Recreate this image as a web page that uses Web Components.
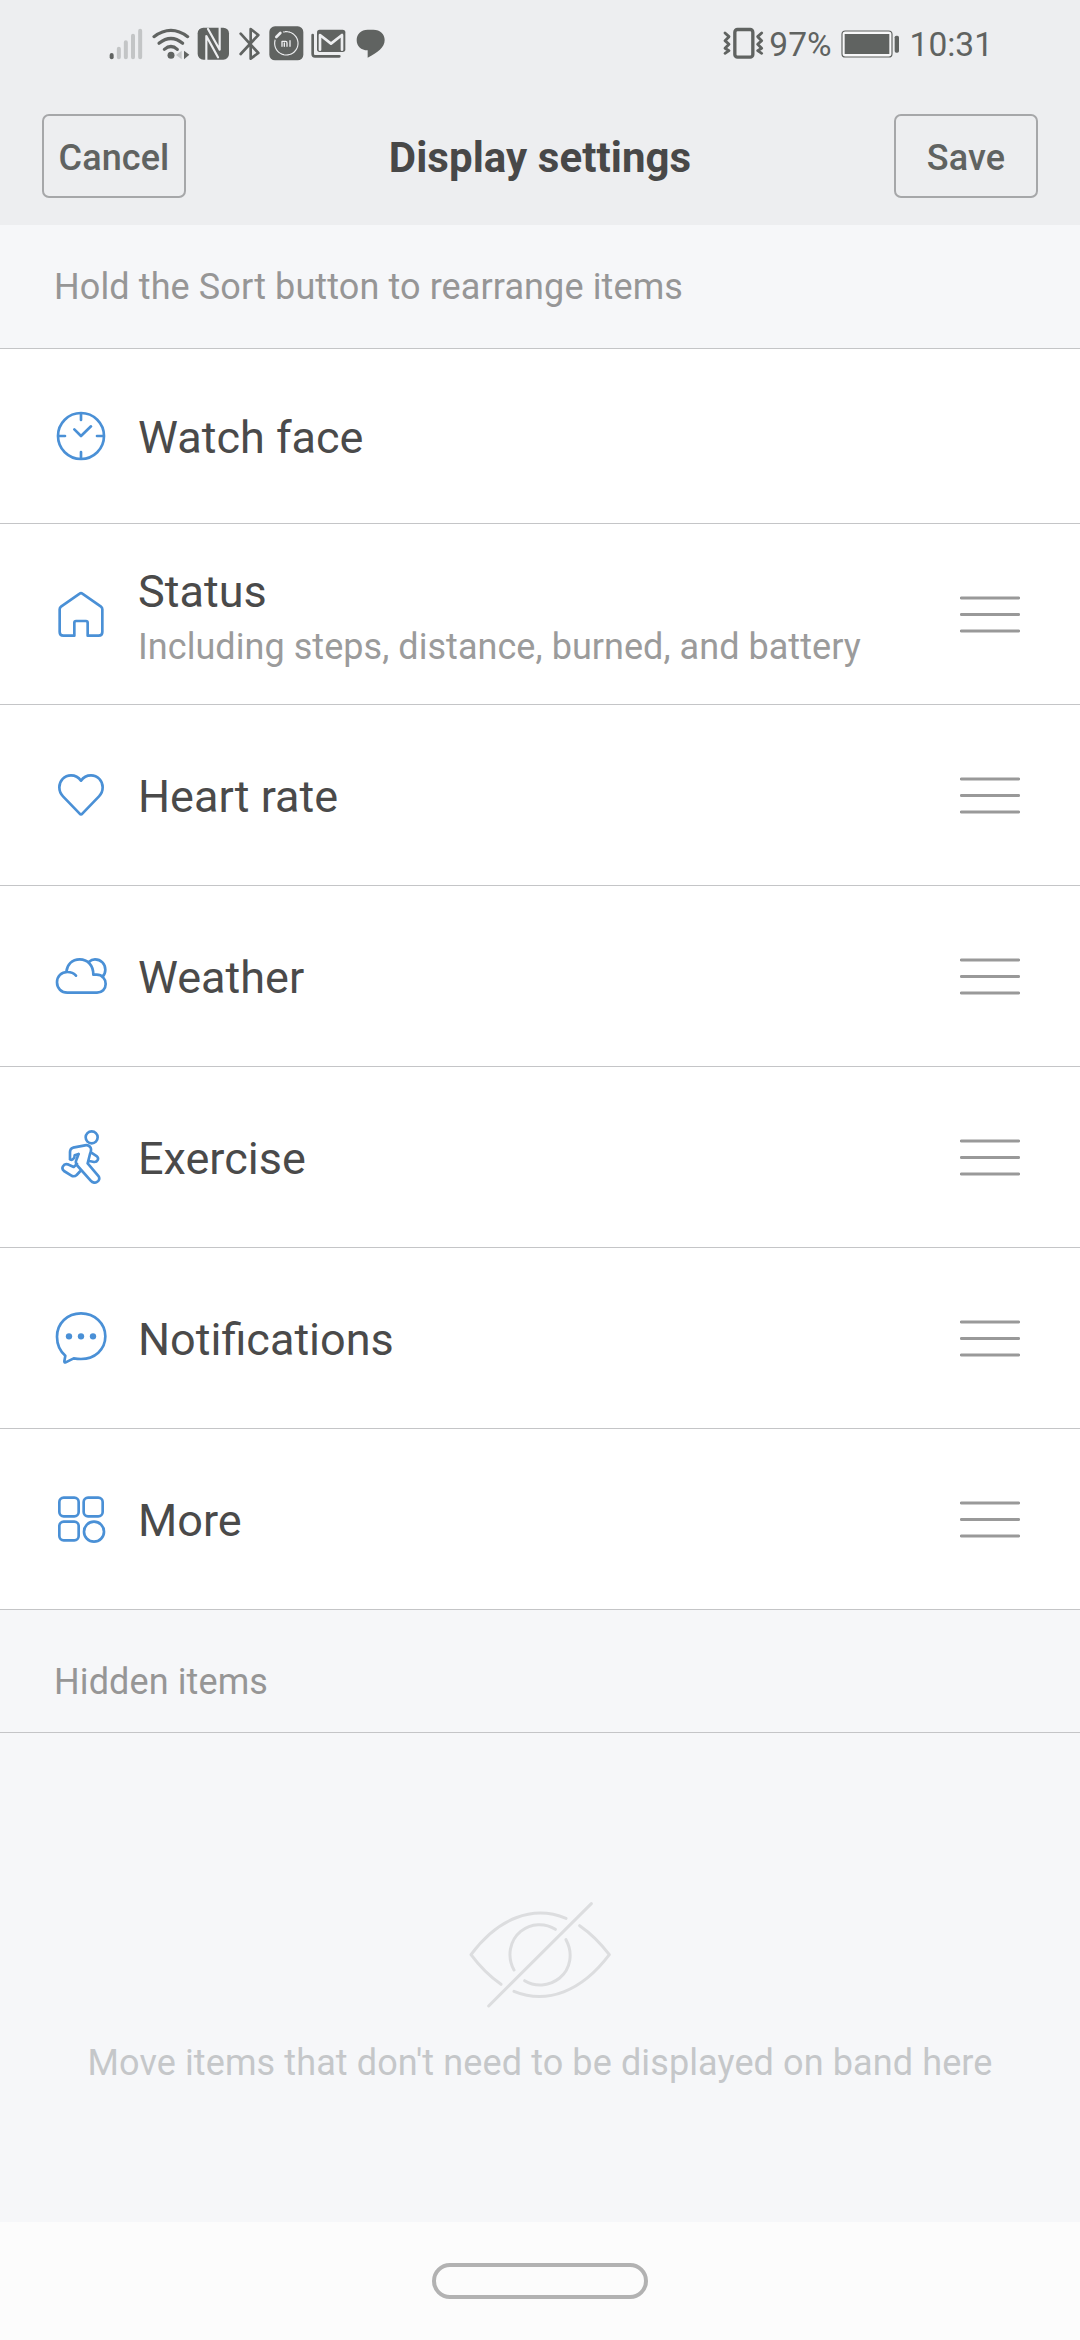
<!DOCTYPE html>
<html lang="en">
<head>
<meta charset="utf-8">
<title>Display settings</title>
<style>
html,body{margin:0;padding:0}
body{width:1080px;height:2340px;overflow:hidden;font-family:Roboto,"Liberation Sans",sans-serif;background:#f6f7f9}
</style>
</head>
<body>
<settings-screen></settings-screen>
<script>
// Glyphs are authored on a grid of three units per CSS pixel.
const ICONS = {
  signal: ['57 51 102 96', `<g stroke-width="12" stroke-linecap="round"><path d="M65 132V139" stroke="#606361"/><g stroke="#c3c5c6"><path d="M86.500 113V139M107.500 94V139M129 74V139M150.500 59V139"/></g></g>`],
  wifi: ['183 51 114 96', `<g fill="none" stroke="#606361" stroke-width="9.500" stroke-linecap="round"><path d="M189 77Q240 39 290 77"/><path d="M204 97Q240 68 275 97"/><path d="M220 115Q240 98 259 115"/></g><circle cx="240" cy="133" r="10.500" fill="#606361"/><path d="M272 119V145L255 132Z" fill="#c3c5c6"/><path d="M279 119L295 131 279 145Z" fill="#606361"/>`],
  nfc: ['320 49 98 99', `<rect x="322" y="51" width="94" height="96" rx="17" fill="#606361"/><g fill="none" stroke="#edeef0" stroke-width="6.500"><path d="M348 147V76L383 140"/><path d="M353 55L388 117V51"/></g>`],
  bluetooth: ['446 48 66 102', `<path d="M451 68L504 126 481 143V54L504 72 451 129" fill="none" stroke="#606361" stroke-width="8" stroke-linejoin="round" stroke-linecap="round"/>`],
  mi: ['536 50 105 105', `<rect x="537" y="51" width="102" height="102" rx="17" fill="#606361"/><circle cx="588" cy="102" r="35" fill="none" stroke="#edeef0" stroke-width="3.500" stroke-dasharray="6 1"/><path d="M558 83L570 71" stroke="#606361" stroke-width="18"/><path d="M558 83L570 71" stroke="#edeef0" stroke-width="8" stroke-linecap="round"/><path d="M575 111V96H586Q590 96 590 101V111M582 101V111M599 94V111" fill="none" stroke="#edeef0" stroke-width="4"/>`],
  mail: ['662 58 105 87', `<rect x="680" y="60" width="85" height="67" rx="8" fill="#606361"/><path d="M667 76V133Q667 140 674 140H747" fill="none" stroke="#606361" stroke-width="8"/><path d="M689 120V76L722 102 755 76V120" fill="none" stroke="#edeef0" stroke-width="8"/>`],
  chat: ['796 58 88 87', `<path d="M831 60H848C869 60 882 74 882 91C882 113 861 129 831 144V122C811 122 798 109 798 91C798 73 811 60 831 60Z" fill="#606361"/>`],
  vibrate: ['69 50 123 98', `<rect x="104.500" y="57.500" width="54" height="83" rx="8" fill="none" stroke="#606361" stroke-width="10"/><path d="M75 68L87 79 75 91 87 102 75 114 87 121 75 129M185 68L173 79 185 91 173 102 185 114 173 121 185 129" fill="none" stroke="#606361" stroke-width="8.500" stroke-linecap="round" stroke-linejoin="round"/>`],
  battery: ['422 58 177 84', `<rect x="425" y="61" width="150" height="78" rx="10" fill="#f8f8f9" stroke="#606361" stroke-width="3.500"/><rect x="433" y="70" width="134" height="60" fill="#606361"/><rect x="583" y="75" width="13" height="51" rx="5" fill="#606361"/>`],
  watch: ['72 87 162 162', `<circle cx="153" cy="168" r="69"/><path d="M153 102V120M153 216V234M87 168H105M201 168H219M133 148L153 168 183 139"/>`],
  house: ['72 621 162 162', `<path d="M149 641Q153 638 157 641L213 680Q217 683 217 688V756Q217 767 206 767H173V728Q173 723 168 723H138Q133 723 133 728V767H100Q89 767 89 756V688Q89 683 93 680Z"/>`],
  heart: ['72 114 162 162', `<path d="M153 152C144 139 132 136 123 136C103 136 88 152 88 172C88 183 92 192 99 199L149 251Q153 256 157 251L207 199C214 192 218 183 218 172C218 152 203 136 183 136C173 136 161 140 153 152Z"/>`],
  weather: ['72 657 162 162', `<path d="M138 737C131 729 122 726 112 726C94 726 81 739 81 757C81 775 94 788 112 788H201C216 788 227 777 227 762C227 746 216 734 200 734H190C190 706 173 688 149 688C126 688 111 704 109 726M176 696C183 690 188 688 195 688C213 688 226 702 226 719C226 728 223 735 217 741"/>`],
  run: ['72 90 162 162', `<circle cx="185" cy="112" r="18"/><path d="M146 162L139 180C136 187 138 193 143 198L182 242C193 255 214 243 206 229L173 190M120 178V156Q120 146 129 143L165 136Q176 134 182 143Q185 150 180 162L173 190M120 178C127 182 134 176 134 166L146 162M184 158L201 169C208 176 202 187 192 186L178 183M141 192L131 201 113 193C100 190 92 205 102 213L123 226Q132 232 140 225L154 210"/>`],
  bubble: ['72 633 162 162', `<path d="M106 767C90 753 81 733 81 710C81 670 112 640 153 640C194 640 226 670 226 709C226 749 194 777 153 777C144 777 137 776 131 775L107 787Q103 789 103 784L106 767Z"/><g fill="#4a90d6" stroke="none"><circle cx="117" cy="709" r="9.500"/><circle cx="153" cy="709" r="9.500"/><circle cx="189" cy="709" r="9.500"/></g>`],
  grid: ['72 96 162 162', `<rect x="88" y="113" width="58" height="56" rx="13"/><rect x="161" y="113" width="57" height="56" rx="13"/><rect x="88" y="185" width="58" height="56" rx="13"/><circle cx="192" cy="215" r="30"/>`],
  handle: ['0 0 180 111', `<path d="M4 6H176M4 55.500H176M4 105H176" stroke="#999" stroke-width="9" stroke-linecap="round"/>`],
  hidden: ['84 90 432 330', `<g fill="none" stroke="#dcdddf" stroke-width="9" stroke-linecap="round" stroke-linejoin="round"><path d="M146 408L454 101M378 145C278 104 174 145 93 254Q133 308 183 343M419 167Q467 200 508 254C425 364 321 405 222 364M346 178C315 158 274 159 242 184C209 211 200 260 222 300M378 209C400 249 392 297 359 324C326 350 285 351 254 332"/></g>`]
};

class AppIcon extends HTMLElement {
  connectedCallback() {
    const [box, art] = ICONS[this.getAttribute('name')];
    const [, , w, h] = box.split(' ').map(Number);
    this.attachShadow({mode: 'open'}).innerHTML = `
      <style>:host{display:block;flex:none}svg{display:block;fill:none;stroke-linecap:round;stroke-linejoin:round}
      :host([outline]) svg{stroke:#4a90d6;stroke-width:8}</style>
      <svg width="${w / 3}" height="${h / 3}" viewBox="${box}">${art}</svg>`;
  }
}
customElements.define('app-icon', AppIcon);

function component(name, html) {
  const template = document.createElement('template');
  template.innerHTML = html;
  customElements.define(name, class extends HTMLElement {
    constructor() {
      super();
      this.attachShadow({mode: 'open'}).append(template.content.cloneNode(true));
    }
  });
}

component('status-bar', `
  <style>
    :host{display:flex;box-sizing:border-box;height:87px;align-items:center;justify-content:space-between;padding:0 87px 0 109px;background:#edeef0;color:#606361;font-size:33.500px;line-height:40px}
    div{display:flex;align-items:center}
    .left app-icon{margin-right:8.500px}
    .time{margin-left:9.500px}.battery{margin-left:9.500px}.pct{margin-left:5px}
    span{padding-top:2px}
  </style>
  <div class="left">
    <app-icon name="signal"></app-icon><app-icon name="wifi" style="margin-right:7.700px"></app-icon><app-icon name="nfc" style="margin-right:9.300px"></app-icon><app-icon name="bluetooth" style="margin-right:8px"></app-icon><app-icon name="mi" style="margin-right:7px"></app-icon><app-icon name="mail" style="margin-right:9.700px"></app-icon><app-icon name="chat"></app-icon>
  </div>
  <div><app-icon name="vibrate"></app-icon><span class="pct">97%</span><app-icon class="battery" name="battery"></app-icon><span class="time">10:31</span></div>`);

component('outline-button', `
  <style>
    :host{display:block}
    button{display:flex;align-items:center;justify-content:center;box-sizing:border-box;width:144px;height:84px;margin:0;padding:3px 0 0;border:2px solid #a6a7a9;border-radius:7px;background:none;font:500 36px/42px Roboto,sans-serif;letter-spacing:.1px;color:#606361}
  </style>
  <button><slot></slot></button>`);

component('title-bar', `
  <style>
    :host{display:flex;box-sizing:border-box;height:138px;align-items:center;justify-content:space-between;padding:0 42px;background:#edeef0}
    h1{margin:0;padding-top:3px;font-size:42px;line-height:50px;font-weight:700;letter-spacing:.06px;color:#484848}
  </style>
  <slot name="start"></slot><h1><slot></slot></h1><slot name="end"></slot>`);

component('section-label', `
  <style>
    :host{display:flex;box-sizing:border-box;height:124px;align-items:center;padding:0 54px;border-bottom:1px solid #c4c5c7;background:#f6f7f9;color:#969696;font-size:36px;line-height:42px;letter-spacing:.11px}
    :host([lower]){height:123px;padding-top:21px}
  </style>
  <slot></slot>`);

component('setting-row', `
  <style>
    :host{display:flex;box-sizing:border-box;height:181px;align-items:center;padding:0 60px 0 54px;border-bottom:1px solid #c4c5c7;background:#fff}
    :host([fixed]){height:175px}
    .text{display:flex;flex-direction:column;flex:1;margin-left:30px;padding-top:3px;font-size:45px;line-height:60px;color:#4a4a4a}
    ::slotted([slot=note]){display:block;margin-bottom:-2px;font-size:36px;line-height:50px;letter-spacing:.05px;color:#9b9b9b}
  </style>
  <slot name="icon"></slot>
  <div class="text"><span><slot></slot></span><slot name="note"></slot></div>
  <slot name="handle"></slot>`);

component('empty-state', `
  <style>
    :host{display:flex;flex:1;flex-direction:column;align-items:center;padding-top:167px;color:#c5c7c9;font-size:36px;line-height:42px;letter-spacing:.11px}
    p{margin:32px 0 0}
  </style>
  <app-icon name="hidden"></app-icon><p><slot></slot></p>`);

component('nav-bar', `
  <style>
    :host{display:flex;box-sizing:border-box;height:118px;justify-content:center;padding-top:41px;background:#fcfcfc}
    i{display:block;box-sizing:border-box;width:216px;height:36px;border:4.500px solid #b2b2b2;border-radius:18px}
  </style><i></i>`);

const row = (icon, label, note = '', fixed = false) => `
  <setting-row ${fixed ? 'fixed' : ''}><app-icon slot="icon" name="${icon}" outline></app-icon>${label}${note ? `<span slot="note">${note}</span>` : ''}${fixed ? '' : '<app-icon slot="handle" name="handle"></app-icon>'}</setting-row>`;

component('settings-screen', `
  <style>:host{display:flex;flex-direction:column;width:1080px;height:2340px;background:#f6f7f9}</style>
  <status-bar></status-bar>
  <title-bar><outline-button slot="start">Cancel</outline-button>Display settings<outline-button slot="end">Save</outline-button></title-bar>
  <section-label>Hold the Sort button to rearrange items</section-label>
  ${row('watch', 'Watch face', '', true)}
  ${row('house', 'Status', 'Including steps, distance, burned, and battery')}
  ${row('heart', 'Heart rate')}
  ${row('weather', 'Weather')}
  ${row('run', 'Exercise')}
  ${row('bubble', 'Notifications')}
  ${row('grid', 'More')}
  <section-label lower>Hidden items</section-label>
  <empty-state>Move items that don't need to be displayed on band here</empty-state>
  <nav-bar></nav-bar>`);
</script>
</body>
</html>
